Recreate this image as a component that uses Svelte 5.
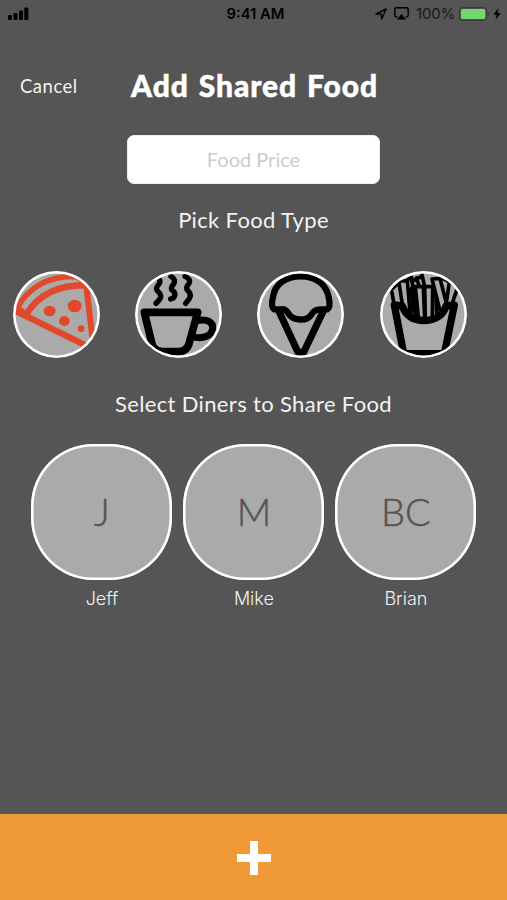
<script lang="ts">
  type Diner = { initials: string; name: string }

  const foods = ['pizza', 'coffee', 'ice cream', 'fries']

  const diners: Diner[] = [
    { initials: 'J', name: 'Jeff' },
    { initials: 'M', name: 'Mike' },
    { initials: 'BC', name: 'Brian' }
  ]

  let price = $state('')
  let selectedFood = $state('pizza')
  let sharing: string[] = $state([])

  // Add or remove a diner from the shared item
  function toggleDiner(name: string): void {
    if (sharing.includes(name)) {
      sharing = sharing.filter((n) => n !== name)
    } else {
      sharing = [...sharing, name]
    }
  }
</script>

<div class="screen">
  <div class="status">
    <svg class="signal" viewBox="0 0 21 13" width="21" height="13">
      <rect x="0" y="8" width="4" height="5" rx="1" />
      <rect x="5.5" y="6" width="4" height="7" rx="1" />
      <rect x="11" y="3.5" width="4" height="9.5" rx="1" />
      <rect x="16.3" y="0.5" width="4" height="12.5" rx="1" />
    </svg>
    <span class="time">9:41 AM</span>
    <div class="right">
      <svg viewBox="0 0 12 12" width="12" height="12">
        <path d="M1 6 L11 1 L6.7 11 L6.3 6.1 Z" fill="none" stroke="#000" stroke-width="1.4" stroke-linejoin="round" />
      </svg>
      <svg class="airplay" viewBox="0 0 15 13" width="15" height="13">
        <path d="M3.4 9.8 H2.5 Q0.8 9.8 0.8 8.2 V2.5 Q0.8 0.8 2.5 0.8 H12.5 Q14.2 0.8 14.2 2.5 V8.2 Q14.2 9.8 12.5 9.8 H11.6" fill="none" stroke="#000" stroke-width="1.4" />
        <path d="M7.5 7 L12.2 12.4 H2.8 Z" />
      </svg>
      <span class="percent">100%</span>
      <svg viewBox="0 0 31 14" width="31" height="14">
        <rect x="0.6" y="0.7" width="27" height="12.6" rx="3" fill="none" stroke="#333" stroke-width="1" />
        <rect x="2" y="2" width="24.3" height="10" rx="1.6" fill="#75d66d" />
        <path d="M29 4.7 Q31 7 29 9.3 Z" fill="#333" />
      </svg>
      <svg class="bolt" viewBox="0 0 8 12" width="8" height="12">
        <path d="M5.5 0 L0.3 6.8 H3.6 L2.4 12 L7.8 5 H4.4 Z" />
      </svg>
    </div>
  </div>

  <header>
    <button class="cancel">Cancel</button>
    <h1>Add Shared Food</h1>
  </header>

  <input class="price" type="text" placeholder="Food Price" bind:value={price} />

  <h2 class="pick">Pick Food Type</h2>

  <div class="foods">
    {#each foods as food}
      <button
        class="food"
        class:selected={food === selectedFood}
        aria-label={food}
        onclick={() => (selectedFood = food)}
      >
        <svg viewBox="24 27 261 261" fill="none" stroke="currentColor" stroke-linecap="round" stroke-linejoin="round">
          {#if food === 'pizza'}
            <path d="M28 145 L250 254" stroke-width="19" />
            <path d="M37 137 C68 80 125 43 205 43" stroke-width="17" />
            <path d="M66 154 C100 100 155 67 248 70" stroke-width="19" />
            <path d="M36 139 L66 159" stroke-width="19" />
            <path d="M205 43 Q236 49 244 72 L262 226" stroke-width="18" />
            <g fill="currentColor" stroke="none">
              <ellipse cx="134" cy="147" rx="18" ry="16" />
              <ellipse cx="209" cy="132" rx="21" ry="19" />
              <ellipse cx="178" cy="177" rx="16" ry="15" />
              <circle cx="228" cy="200" r="10" />
            </g>
          {:else if food === 'coffee'}
            <g stroke-width="16">
              <path d="M86 43 Q105 52 96 66 Q83 80 93 88 Q107 101 98 112 L87 124" />
              <path d="M132 43 Q149 53 139 67 Q127 80 139 87 Q149 96 139 108 L131 111" />
              <path d="M174 43 Q194 52 185 66 Q173 79 184 87 Q194 98 187 110 L176 124" />
            </g>
            <path d="M52 151 H212 L185 249 Q177 269 153 269 H106 Q82 268 75 246 Z" stroke-width="23" />
            <path d="M211 176 C240 169 259 181 257 199 C255 223 227 230 206 226" stroke-width="21" />
          {:else if food === 'ice cream'}
            <path d="M86 142 H75 Q65 134 72 105 C78 65 111 43 155 43 C200 43 231 66 239 105 Q246 137 235 142 H213 Q196 142 187 158 C174 178 132 178 118 154 Q109 140 98 142 H84" stroke-width="19" />
            <path d="M91 151 L147 271 H164 L222 149" stroke-width="21" />
          {:else}
            <path d="M67 129 L95 275 H217 L247 129 L222 132 Q210 173 157 176 Q105 174 91 132 Z" stroke-width="22" />
            <g stroke-width="11">
              <path d="M60 91 L66 126 M81 62 L91 127 M60 81 L86 57 H106 L114 149" />
              <path d="M101 57 L119 46 L132 158 M130 74 L139 165 M130 74 H154 L158 169" />
              <path d="M150 39 L158 74 H182 L181 165 M158 74 L160 162" />
              <path d="M180 51 L203 142 M180 51 L204 49 L226 135 M208 47 L232 60 L222 130 M255 82 L240 126" />
              <path d="M120 58 L151 42 M133 48 L142 73 M118 80 L124 150 M192 100 L194 152" />
            </g>
          {/if}
        </svg>
      </button>
    {/each}
  </div>

  <h2 class="select">Select Diners to Share Food</h2>

  <div class="diners">
    {#each diners as diner}
      <div class="diner">
        <button class="avatar" class:sharing={sharing.includes(diner.name)} onclick={() => toggleDiner(diner.name)}>
          {diner.initials}
        </button>
        <span class="name">{diner.name}</span>
      </div>
    {/each}
  </div>

  <button class="add" aria-label="add">
    <svg viewBox="0 0 34 34" width="34" height="34">
      <path d="M13 0 H21 V13 H34 V21 H21 V34 H13 V21 H0 V13 H13 Z" fill="#fff" />
    </svg>
  </button>
</div>

<style>
  :global(body) {
    background: #555;
  }
  .screen {
    display: flex;
    flex-direction: column;
    height: 900px;
    background: #555;
    color: #f2f2f2;
    font-family: Lato, 'Open Sans', sans-serif;
  }
  button {
    padding: 0;
    border: none;
    font-family: inherit;
    cursor: pointer;
  }
  svg {
    display: block;
  }
  .status {
    display: grid;
    grid-template-columns: 1fr auto 1fr;
    align-items: center;
    height: 27px;
    padding: 0 6px 0 8px;
    color: #000;
    font-family: Inter, sans-serif;
    font-size: 15px;
  }
  .time {
    font-weight: 600;
    font-size: 14.8px;
    transform: translateX(1px);
  }
  .right {
    display: flex;
    align-items: center;
    justify-content: flex-end;
  }
  .airplay {
    margin-left: 7px;
  }
  .percent {
    margin: 0 4px 0 7px;
    color: #181818;
    letter-spacing: -0.2px;
  }
  .bolt {
    margin-left: 3px;
  }
  header {
    display: grid;
    grid-template-columns: 111px auto 1fr;
    align-items: center;
    height: 36px;
    margin-top: 41px;
    padding: 0 20px;
  }
  .cancel {
    background: none;
    color: #f2f2f2;
    font-size: 18.5px;
    letter-spacing: 0.5px;
    text-align: left;
  }
  h1 {
    margin: -2px 0 0;
    color: #fff;
    font-size: 30px;
    font-weight: 900;
    letter-spacing: 0.6px;
    line-height: 34px;
    white-space: nowrap;
    -webkit-text-stroke: 0.5px #fff;
    word-spacing: 2px;
    letter-spacing: 0.9px;
  }
  .price {
    box-sizing: border-box;
    align-self: center;
    width: 253px;
    height: 49px;
    margin-top: 31px;
    padding: 0 2px 2px;
    border: 1px solid #eee;
    border-radius: 7px;
    background: #fff;
    font-family: inherit;
    font-size: 20px;
    text-align: center;
    outline: none;
  }
  .price::placeholder {
    color: #ccc;
  }
  h2 {
    margin: 0;
    font-size: 22px;
    font-weight: 400;
    letter-spacing: 0.35px;
    line-height: 30px;
    text-align: center;
  }
  .pick {
    margin-top: 21px;
  }
  .foods {
    display: flex;
    gap: 35.2px;
    margin-top: 36px;
    padding-left: 13px;
  }
  .food {
    position: relative;
    width: 87px;
    height: 87px;
    border-radius: 50%;
    background: #aaa;
    color: #000;
    overflow: hidden;
  }
  /* white ring sits over the icon */
  .food::after {
    content: '';
    position: absolute;
    inset: 0;
    border-radius: 50%;
    box-shadow: inset 0 0 0 2.6px #fff;
  }
  .food.selected {
    color: #e2492c;
  }
  .select {
    margin-top: 31px;
  }
  .diners {
    display: flex;
    gap: 11px;
    margin-top: 25px;
    padding-left: 31.4px;
  }
  .diner {
    display: flex;
    flex-direction: column;
    align-items: center;
  }
  .avatar {
    width: 141px;
    height: 136px;
    padding-bottom: 2px;
    border-radius: 62px;
    background: #aaa;
    box-shadow: inset 0 0 0 2.6px #fff;
    color: #555;
    font-size: 38px;
    font-weight: 300;
    -webkit-text-stroke: 0.5px #555;
  }
  .avatar.sharing {
    background: #f09a37;
  }
  .name {
    margin-top: 6px;
    font-family: Inter, sans-serif;
    font-size: 18px;
    font-weight: 300;
    line-height: 25px;
  }
  .add {
    display: flex;
    align-items: center;
    justify-content: center;
    height: 86px;
    margin-top: auto;
    padding-top: 2px;
    background: #f09a37;
  }
</style>
